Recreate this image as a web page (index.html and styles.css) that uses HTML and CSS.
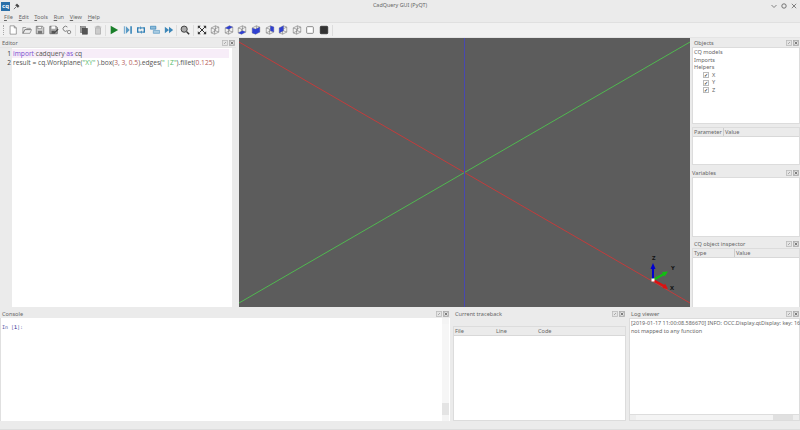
FILE: index.html
```html
<!DOCTYPE html>
<html lang="en">
<head>
<meta charset="utf-8">
<title>CadQuery GUI (PyQT)</title>
<link rel="stylesheet" href="styles.css">
</head>
<body>
<svg class="defs" width="0" height="0">
  <symbol id="cube" viewBox="0 0 12 12">
    <path d="M1.5 3.5 6.5 1 10.5 2.5V8.5L5.5 11 1.5 9.5Z M1.5 3.5 5.5 5V11 M5.5 5 10.5 2.5 M6.5 1V7L1.5 9.5 M6.5 7 10.5 8.5" fill="none" stroke="#777" stroke-width=".7"/>
  </symbol>
  <symbol id="dock-btns" viewBox="0 0 13 6">
    <rect x=".5" y=".5" width="5" height="5" fill="#e4e4e4" stroke="#bbb" stroke-width=".8"/>
    <rect x="7.5" y=".5" width="5" height="5" fill="#ddd" stroke="#aaa" stroke-width=".8"/>
    <path d="M8.7 1.7 11.3 4.3M11.3 1.7 8.7 4.3" stroke="#666" stroke-width=".8"/>
    <path d="M2 4 4 2" stroke="#999" stroke-width=".8"/>
  </symbol>
</svg>
<div class="window">
  <header class="titlebar">
    <div class="title-left">
      <span class="app-logo">cq</span>
      <svg class="pin" viewBox="0 0 8 8" width="7" height="7"><path d="M1 7 3.5 4.5M3 2.5 5.5 5 7 3.5 4.5 1Z" fill="#444" stroke="#444" stroke-width=".8"/></svg>
    </div>
    <div class="title-text">CadQuery GUI (PyQT)</div>
    <div class="win-controls">
      <svg viewBox="0 0 8 8" width="8" height="8"><path d="M1.5 3 4 5.5 6.5 3" fill="none" stroke="#666" stroke-width=".8"/></svg>
      <svg viewBox="0 0 8 8" width="8" height="8"><circle cx="4" cy="4" r="2.2" fill="none" stroke="#666" stroke-width=".9"/></svg>
      <svg viewBox="0 0 8 8" width="8" height="8"><path d="M1.8 1.8 6.2 6.2M6.2 1.8 1.8 6.2" fill="none" stroke="#666" stroke-width=".8"/></svg>
    </div>
  </header>
  <nav class="menubar">
    <span><u>F</u>ile</span><span><u>E</u>dit</span><span><u>T</u>ools</span><span><u>R</u>un</span><span><u>V</u>iew</span><span><u>H</u>elp</span>
  </nav>
  <div class="toolbar">
    <i class="handle"></i>
    <svg class="tb" viewBox="0 0 12 12"><path d="M2.5 1H7.5L10 3.5V11H2.5ZM7.5 1V3.5H10" fill="#fff" stroke="#777" stroke-width=".8"/></svg>
    <svg class="tb" viewBox="0 0 12 12"><path d="M1 3H4.5L5.5 4H10V5.5H3.5L1 10ZM1 10 3.5 5.5H11.5L9.5 10Z" fill="#eee" stroke="#777" stroke-width=".8"/></svg>
    <svg class="tb" viewBox="0 0 12 12"><path d="M1.5 1.5H9L10.5 3V10.5H1.5Z" fill="#ccc" stroke="#666" stroke-width=".8"/><rect x="3.5" y="1.5" width="4.5" height="3" fill="#fff" stroke="#666" stroke-width=".6"/><rect x="3.5" y="7" width="5" height="3.5" fill="#777"/></svg>
    <svg class="tb" viewBox="0 0 12 12"><path d="M1 1.5H8.5L10 3V10.5H1Z" fill="#aaa" stroke="#555" stroke-width=".8"/><rect x="3" y="1.5" width="4.5" height="3" fill="#fff"/><rect x="3" y="7" width="4" height="3.5" fill="#555"/><path d="M6.5 9.5 11 5" stroke="#444" stroke-width="1.4"/></svg>
    <svg class="tb" viewBox="0 0 12 12"><path d="M6.5 2.5A3 3 0 1 0 6.5 6.5" fill="none" stroke="#777" stroke-width="1.1"/><circle cx="8.5" cy="8.5" r="2" fill="none" stroke="#777" stroke-width="1"/></svg>
    <i class="sep"></i>
    <svg class="tb" viewBox="0 0 12 12"><rect x="2" y="2" width="6" height="7" fill="#999" stroke="#666" stroke-width=".7"/><rect x="4" y="4" width="6" height="7" fill="#555" stroke="#444" stroke-width=".7"/></svg>
    <svg class="tb" viewBox="0 0 12 12"><path d="M3 3.5H9V11H3ZM2 2.5H10M4.5 2.5V1.5H7.5V2.5" fill="#ccc" stroke="#aaa" stroke-width=".9"/></svg>
    <i class="sep"></i>
    <svg class="tb" viewBox="0 0 12 12"><path d="M2 1 11 6 2 11Z" fill="#1a7f2a"/></svg>
    <svg class="tb" viewBox="0 0 12 12"><rect x="1" y="1.5" width="1.6" height="9" fill="#7fb0d2"/><path d="M3.5 1.5 8 6 3.5 10.5Z" fill="#5a9ac4"/><rect x="8.8" y="1.5" width="1.8" height="9" fill="#2f7fb5"/></svg>
    <svg class="tb" viewBox="0 0 12 12"><path d="M4.5 3.5H2V8.5H4.5M7.5 8.5H10V3.5H7.5" fill="none" stroke="#2f7fb5" stroke-width="1.6"/><path d="M5 1.5 7.5 3.5 5 5.5ZM7 6.5 4.5 8.5 7 10.5Z" fill="#2f7fb5"/></svg>
    <svg class="tb" viewBox="0 0 12 12"><path d="M.5 1.5H7V5H.5Z" fill="#8fbcd9" stroke="#2f7fb5" stroke-width=".8"/><path d="M4 6.5H11.5V10H4Z" fill="#a9cce2" stroke="#5a9ac4" stroke-width=".8"/></svg>
    <svg class="tb" viewBox="0 0 12 12"><path d="M1 2 6 6 1 10ZM6 2 11 6 6 10Z" fill="#3d87b8"/></svg>
    <i class="sep"></i>
    <svg class="tb" viewBox="0 0 12 12"><circle cx="5" cy="5" r="3.7" fill="#aaa" stroke="#444" stroke-width="1.2"/><path d="M8 8 11 11" stroke="#333" stroke-width="1.8"/></svg>
    <i class="sep"></i>
    <svg class="tb" viewBox="0 0 12 12"><path d="M2.5 2.5 9.5 9.5M9.5 2.5 2.5 9.5" stroke="#333" stroke-width="1.2"/><path d="M1 1H4.5L1 4.5ZM11 1H7.5L11 4.5ZM1 11H4.5L1 7.5ZM11 11H7.5L11 7.5Z" fill="#333"/></svg>
    <svg class="tb" viewBox="0 0 12 12"><use href="#cube"/></svg>
    <svg class="tb" viewBox="0 0 12 12"><use href="#cube"/><path d="M1.5 3.5 6.5 1 10.5 2.5 5.5 5Z" fill="#3040d0"/></svg>
    <svg class="tb" viewBox="0 0 12 12"><use href="#cube"/><path d="M1.5 9.5 6.5 7 10.5 8.5 5.5 11Z" fill="#3040d0"/></svg>
    <svg class="tb" viewBox="0 0 12 12"><use href="#cube"/><path d="M1.5 3.5 5.5 5 10.5 2.5V8.5L5.5 11 1.5 9.5Z" fill="#3040d0"/></svg>
    <svg class="tb" viewBox="0 0 12 12"><use href="#cube"/><path d="M6.5 1 10.5 2.5V8.5L6.5 7Z" fill="#3040d0"/></svg>
    <svg class="tb" viewBox="0 0 12 12"><use href="#cube"/><path d="M1.5 3.5 6.5 1V7L1.5 9.5Z" fill="#3040d0"/></svg>
    <svg class="tb" viewBox="0 0 12 12"><use href="#cube"/></svg>
    <svg class="tb" viewBox="0 0 12 12"><rect x="2" y="2" width="8" height="8" rx="1" fill="#fff" stroke="#666" stroke-width=".9"/></svg>
    <svg class="tb" viewBox="0 0 12 12"><rect x="1.5" y="1.5" width="9" height="9" rx="1" fill="#333" stroke="#222" stroke-width=".8"/></svg>
    <i class="sep"></i>
  </div>

  <main class="workspace">
    <section class="dock editor-dock">
      <div class="dock-title"><span>Editor</span><svg class="dock-btns"><use href="#dock-btns"/></svg></div>
      <div class="editor">
        <div class="gutter"><div>1</div><div>2</div></div>
        <div class="code">
          <div class="line current"><span class="kw">import</span><span class="ws">·</span>cadquery<span class="ws">·</span><span class="kw">as</span><span class="ws">·</span>cq</div>
          <div class="line">result = cq.Workplane(<span class="str">"XY"</span> ).box(<span class="num">3</span>, <span class="num">3</span>, <span class="num">0.5</span>).edges(<span class="str">" |Z"</span>).fillet(<span class="num">0.125</span>)</div>
        </div>
        <div class="scroll-v"></div>
      </div>
    </section>

    <section class="viewer">
      <svg class="scene" viewBox="0 0 451 269" preserveAspectRatio="none">
        <line x1="0" y1="4" x2="451" y2="265" stroke="#c23c3c" stroke-width="1"/>
        <line x1="0" y1="265" x2="451" y2="4" stroke="#50b850" stroke-width="1"/>
        <line x1="225.5" y1="0" x2="225.5" y2="269" stroke="#4848b0" stroke-width="1"/>
      </svg>
      <svg class="triad" viewBox="0 0 40 34" width="40" height="34">
        <path d="M14 24V11" stroke="#0000d0" stroke-width="2"/>
        <path d="M14 7 11.5 13H16.5Z" fill="#0000d0"/>
        <path d="M14 24 25 18" stroke="#10c010" stroke-width="2"/>
        <path d="M29 15.5 23 16 25.5 20.5Z" fill="#10c010"/>
        <path d="M14 24 25 30" stroke="#e01010" stroke-width="2"/>
        <path d="M29 33 23.5 32 26 27.5Z" fill="#e01010"/>
        <rect x="12.5" y="22.5" width="3" height="3" fill="#fff"/>
      </svg>
      <span class="axis ax-z">Z</span><span class="axis ax-y">Y</span><span class="axis ax-x">X</span>
    </section>

    <aside class="right-col">
      <section class="dock objects">
        <div class="dock-title"><span>Objects</span><svg class="dock-btns"><use href="#dock-btns"/></svg></div>
        <div class="panel tree">
          <div>CQ models</div>
          <div>Imports</div>
          <div>Helpers</div>
          <div class="check"><b>✓</b>X</div>
          <div class="check"><b>✓</b>Y</div>
          <div class="check"><b>✓</b>Z</div>
        </div>
      </section>
      <section class="dock params">
        <div class="panel table">
          <div class="thead"><span class="c-param">Parameter</span><span>Value</span></div>
        </div>
      </section>
      <section class="dock variables">
        <div class="dock-title"><span>Variables</span><svg class="dock-btns"><use href="#dock-btns"/></svg></div>
        <div class="panel"></div>
      </section>
      <section class="dock inspector">
        <div class="dock-title"><span>CQ object inspector</span><svg class="dock-btns"><use href="#dock-btns"/></svg></div>
        <div class="panel table">
          <div class="thead"><span class="c-type">Type</span><span>Value</span></div>
        </div>
      </section>
    </aside>
  </main>

  <div class="bottom">
    <section class="dock console">
      <div class="dock-title"><span>Console</span><svg class="dock-btns"><use href="#dock-btns"/></svg></div>
      <div class="console-body">
        <div class="prompt">In [<strong>1</strong>]:</div>
        <div class="console-scroll"><i class="up"></i><i class="thumb"></i><i class="down"></i></div>
      </div>
    </section>
    <section class="dock traceback">
      <div class="dock-title"><span>Current traceback</span><svg class="dock-btns"><use href="#dock-btns"/></svg></div>
      <div class="tb-spacer"></div>
      <div class="panel table">
        <div class="thead"><span class="c-file">File</span><span class="c-line">Line</span><span>Code</span></div>
      </div>
    </section>
    <section class="dock log">
      <div class="dock-title"><span>Log viewer</span><svg class="dock-btns"><use href="#dock-btns"/></svg></div>
      <div class="panel log-body">
        <div class="log-text">[2019-01-17 11:00:08.586670] INFO: OCC.Display.qtDisplay: key: 16<br>not mapped to any function</div>
        <div class="log-scroll"><i class="left"></i><i class="hthumb"></i><i class="right"></i></div>
      </div>
    </section>
  </div>
  <footer class="statusbar"></footer>
</div>
</body>
</html>
```
FILE: styles.css
```css
* { box-sizing: border-box; }
html, body { margin: 0; padding: 0; }
body { width: 800px; height: 430px; overflow: hidden; background: #ebebeb; font-family: "Noto Sans", sans-serif; font-size: 5.6px; color: #555; }
.defs { position: absolute; }
.window { width: 800px; height: 430px; display: flex; flex-direction: column; background: #ebebeb; }

.titlebar { height: 11px; display: flex; align-items: center; justify-content: space-between; position: relative; padding: 1px 2px 0 1px; }
.title-left { display: flex; align-items: center; gap: 3px; }
.app-logo { width: 9px; height: 9px; background: #2a6fa8; color: #fff; font-weight: 700; font-size: 6px; line-height: 8px; text-align: center; }
.title-text { position: absolute; left: 0; right: 0; top: 1px; text-align: center; font-size: 5.4px; color: #666; line-height: 9px; }
.win-controls { display: flex; gap: 2px; }

.menubar { height: 10px; margin-top: 1px; display: flex; gap: 5.7px; padding-left: 4px; align-items: center; font-size: 5.6px; color: #666; }
.menubar u { text-decoration-thickness: .5px; text-underline-offset: 1px; }

.toolbar { height: 16px; display: flex; align-items: center; background: #f1f1f1; border-top: 1px solid #e0e0e0; border-bottom: 1px solid #e4e4e4; padding-left: 3px; }
.handle { width: 1px; height: 10px; margin-right: 2.2px; border-left: 1px dotted #aaa; }
.tb { width: 10px; height: 10px; margin: 0 1.8px; flex: none; }
.sep { width: 1px; height: 11px; background: #ddd; margin: 0 1px; flex: none; }

.workspace { height: 269px; display: flex; }
.dock { display: flex; flex-direction: column; min-width: 0; }
.dock-title { height: 9px; display: flex; align-items: center; justify-content: space-between; padding: 0 1px 0 2px; font-size: 5.6px; color: #666; flex: none; }
.dock-btns { width: 13px; height: 6px; flex: none; }

.editor-dock { width: 236px; }
.editor { flex: 1; display: flex; background: #fff; margin-top: 0; border-top: 1px solid #e4e4e4; }
.gutter { width: 12px; background: #ebebeb; color: #444; font-size: 6.6px; line-height: 9.4px; text-align: right; padding: 1px 1px 0 0; }
.code { flex: 1; padding-top: 1px; font-size: 6.65px; line-height: 9.4px; color: #555; white-space: nowrap; font-family: "Open Sans", sans-serif; }
.line { padding-left: 1px; height: 9.4px; margin-right: 3px; }
.current { background: #f7edf8; }
.kw { color: #7a4fd0; }
.ws { color: #aaa; }
.str { color: #55b96a; }
.num { color: #b5605a; }
.scroll-v { width: 4px; background: #ebebeb; }

.viewer { width: 451px; margin-left: 3px; background: #5c5c5c; position: relative; }
.scene { display: block; width: 100%; height: 100%; }
.triad { position: absolute; left: 400px; top: 218px; }
.axis { position: absolute; font-size: 6px; font-weight: 700; color: #111; line-height: 6px; }
.ax-z { left: 413px; top: 217px; }
.ax-y { left: 432px; top: 227px; }
.ax-x { left: 431px; top: 247px; }

.right-col { flex: 1; margin-left: 2px; display: flex; flex-direction: column; }
.panel { background: #fff; border: 1px solid #dcdcdc; flex: 1; }
.objects { height: 86px; }
.tree { line-height: 7.5px; padding: 1px 0 0 1px; color: #666; font-size: 5.6px; }
.check { padding-left: 9px; display: flex; align-items: center; }
.check b { width: 6px; height: 6px; border: 1px solid #bbb; margin-right: 3px; font-size: 5px; line-height: 4px; font-weight: 700; color: #333; text-align: center; }
.params { height: 41px; padding-top: 3px; }
.thead { height: 9px; display: flex; align-items: center; background: #ebebeb; border-bottom: 1px solid #d8d8d8; padding-left: 1px; color: #666; font-size: 5.6px; }
.c-param { width: 30px; border-right: 1px solid #ccc; margin-right: 1px; }
.variables { height: 72px; padding-top: 3px; }
.variables .dock-title { padding-left: 0; }
.inspector { flex: 1; padding-top: 2px; }
.c-type { width: 41px; border-right: 1px solid #ccc; margin-right: 1px; }
.inspector .panel { border-bottom: 0; }

.bottom { flex: 1; display: flex; padding-top: 2px; }
.console { width: 450px; }
.console-body { flex: 1; display: flex; background: #fff; border-left: 1px solid #e0e0e0; }
.prompt { flex: 1; padding: 6px 0 0 1px; font-family: "DejaVu Sans Mono", monospace; font-size: 5px; color: #5a5aa8; }
.prompt strong { font-weight: 700; }
.console-scroll { width: 7px; margin-right: 1px; background: #e4e4e4; display: flex; flex-direction: column; }
.console-scroll .up, .console-scroll .down { height: 6px; background: #f4f4f4; }
.console-scroll .thumb { flex: 1; margin-bottom: 12px; background: #f6f6f6; }

.traceback { width: 173px; margin-left: 3px; }
.tb-spacer { height: 8px; flex: none; }
.c-file { width: 41px; }
.c-line { width: 42px; }
.log { flex: 1; margin-left: 3px; }
.log-body { display: flex; flex-direction: column; }
.log-text { flex: 1; font-size: 5.45px; line-height: 7.6px; padding: 1px 0 0 1px; color: #666; white-space: nowrap; }
.log-scroll { height: 6px; display: flex; background: #f4f4f4; border-top: 1px solid #ddd; }
.log-scroll .left, .log-scroll .right { width: 6px; background: #eee; }
.log-scroll .hthumb { flex: 1; border-right: 20px solid #e0e0e0; }

.statusbar { height: 9px; flex: none; background: #ebebeb; border-bottom: 1px solid #ddd; }
```
